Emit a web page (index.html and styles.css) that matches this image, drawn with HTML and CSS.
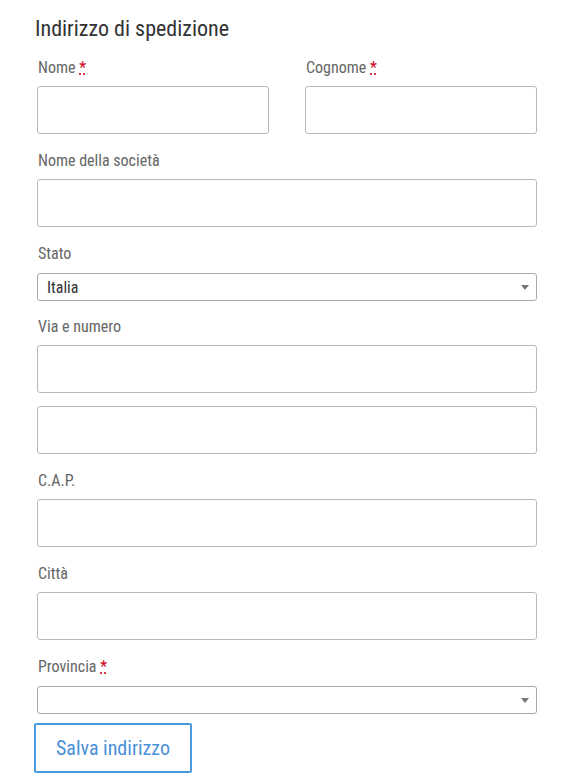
FILE: index.html
```html
<!DOCTYPE html>
<html>
<head>
  <link rel="stylesheet" href="styles.css">
</head>
<body>
  <form class="address-form">
    <h2>Indirizzo di spedizione</h2>

    <div class="row">
      <div class="field">
        <label for="first">Nome <abbr title="obbligatorio">*</abbr></label>
        <input type="text" id="first">
      </div>
      <div class="field">
        <label for="last">Cognome <abbr title="obbligatorio">*</abbr></label>
        <input type="text" id="last">
      </div>
    </div>

    <div class="field">
      <label for="company">Nome della società</label>
      <input type="text" id="company">
    </div>

    <div class="field select-field">
      <label for="country">Stato</label>
      <div class="select-wrap">
        <select id="country">
          <option>Italia</option>
        </select>
      </div>
    </div>

    <div class="field">
      <label for="street">Via e numero</label>
      <input type="text" id="street">
      <input type="text" class="second-line">
    </div>

    <div class="field">
      <label for="zip">C.A.P.</label>
      <input type="text" id="zip">
    </div>

    <div class="field">
      <label for="city">Città</label>
      <input type="text" id="city">
    </div>

    <div class="field select-field last">
      <label for="province">Provincia <abbr title="obbligatorio">*</abbr></label>
      <div class="select-wrap">
        <select id="province">
          <option></option>
        </select>
      </div>
    </div>

    <button type="button">Salva indirizzo</button>
  </form>
</body>
</html>
```

FILE: styles.css
```css
body {
  margin: 0;
  background: #fff;
  font-family: 'Roboto Condensed', 'Roboto', 'Liberation Sans', sans-serif;
  font-stretch: condensed;
}

.address-form {
  width: 500px;
  padding: 14px 0 0 37px;
}

h2 {
  margin: 0 0 14px -2px;
  font-size: 22px;
  font-weight: 400;
  line-height: 30px;
  color: #333;
}

.row {
  display: flex;
  gap: 36px;
}

.row .field {
  flex: 1;
}

.field {
  margin-bottom: 17px;
}

.select-field {
  margin-bottom: 16px;
}

.select-field.last {
  margin-bottom: 9px;
}

label {
  display: block;
  margin: 0 0 8px 1px;
  font-size: 16px;
  line-height: 20px;
  color: #666;
}

.select-field label {
  margin-bottom: 9px;
}

abbr {
  color: #d0021b;
  text-decoration: underline dotted;
  text-decoration-color: #d0021b;
}

input {
  display: block;
  box-sizing: border-box;
  width: 100%;
  height: 48px;
  margin: 0;
  border: 1px solid #b9b9b9;
  border-radius: 3px;
  background: #fff;
}

.second-line {
  margin-top: 13px;
}

.select-wrap {
  position: relative;
}

.select-wrap::after {
  content: '';
  position: absolute;
  right: 8px;
  top: 12px;
  border-left: 4px solid transparent;
  border-right: 4px solid transparent;
  border-top: 5px solid #777;
  pointer-events: none;
}

select {
  display: block;
  box-sizing: border-box;
  width: 100%;
  height: 28px;
  padding: 0 9px;
  border: 1px solid #a9a9a9;
  border-radius: 3px;
  background: #fff;
  font-family: inherit;
  font-size: 16px;
  color: #333;
  appearance: none;
}

button {
  margin-left: -3px;
  width: 158px;
  height: 50px;
  border: 2px solid #4a9be0;
  border-radius: 2px;
  background: #fff;
  color: #4a90d9;
  font-family: inherit;
  font-size: 20px;
  cursor: pointer;
}
```
